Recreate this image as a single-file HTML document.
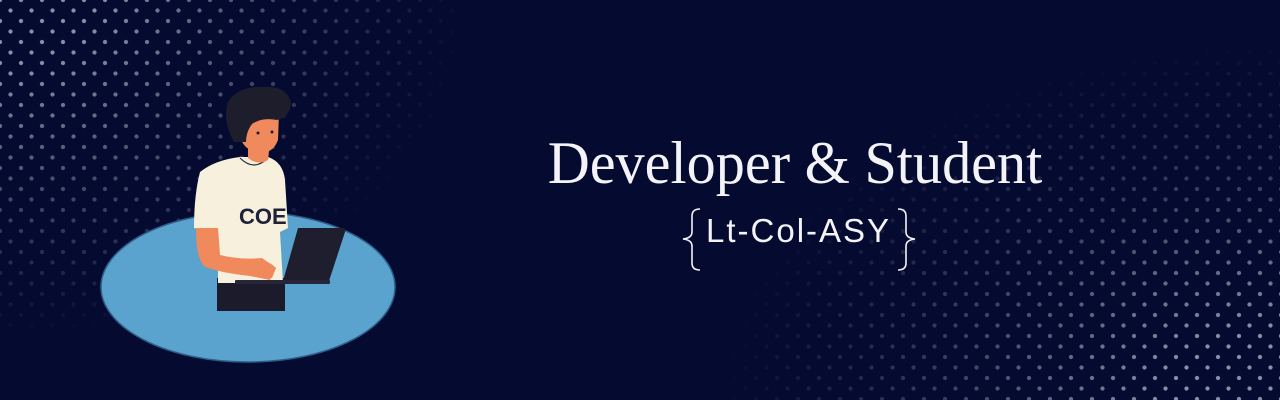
<!DOCTYPE html>
<html><head><meta charset="utf-8"><style>
html,body{margin:0;padding:0}
body{width:1280px;height:400px;overflow:hidden;background:#050a30;position:relative;font-family:"Liberation Sans",sans-serif}
.dots{position:absolute;inset:0;
background-image:radial-gradient(circle,#8a8ea6 1.8px,transparent 2.4px),radial-gradient(circle,#8a8ea6 1.8px,transparent 2.4px);
background-size:21px 21px,21px 21px;background-position:0 0,10.5px 10.5px}
.d1{-webkit-mask-image:radial-gradient(ellipse 470px 340px at 0 0,#000 20%,rgba(0,0,0,.45) 60%,transparent 100%);mask-image:radial-gradient(ellipse 470px 340px at 0 0,#000 20%,rgba(0,0,0,.45) 60%,transparent 100%)}
.d2{-webkit-mask-image:radial-gradient(ellipse 560px 360px at 1280px 400px,#000 20%,rgba(0,0,0,.4) 60%,transparent 100%);mask-image:radial-gradient(ellipse 560px 360px at 1280px 400px,#000 20%,rgba(0,0,0,.4) 60%,transparent 100%)}
.title{position:absolute;left:538px;top:128px;width:514px;text-align:center;font-family:"Liberation Serif",serif;font-size:60px;color:#f3f3f8;white-space:nowrap;line-height:70px;transform:scaleX(0.97);transform-origin:center}
.sub{position:absolute;left:706px;top:211px;font-size:33px;color:#f3f3f8;letter-spacing:2px;line-height:40px}
</style></head><body>
<div class="dots d1"></div>
<div class="dots d2"></div>
<svg width="1280" height="400" style="position:absolute;left:0;top:0">
<ellipse cx="248" cy="287" rx="147" ry="75" fill="#5aa3cf" stroke="#2e5f8a" stroke-width="1.5"/>
<rect x="217" y="278" width="68" height="33" fill="#1c1b2b"/>
<path d="M200 172 Q215 160 240 157 L268 157 Q283 162 285 180 L288 228 L280 232 L283 283 L218 283 L218 232 L194 228 Q194 195 200 172Z" fill="#f6f0dd"/>
<path d="M240 158 Q254 172 268 158" fill="none" stroke="#2a2a3a" stroke-width="1.2"/>
<path d="M196 228 L218 228 L220 255 Q240 260 262 258 L276 268 L270 280 L250 276 Q215 272 204 266 Q196 258 196 228Z" fill="#f08a5d"/>
<path d="M248 142 L270 142 L268 160 Q258 166 248 158Z" fill="#f08a5d"/>
<path d="M242 115 Q262 103 279 112 L278 140 Q272 156 255 152 Q242 148 240 135Z" fill="#f08a5d"/>
<ellipse cx="241" cy="130" rx="5" ry="7" fill="#f08a5d"/>
<path d="M234 142 Q222 120 228 102 Q238 86 262 87 Q287 85 291 103 Q290 117 277 120 Q262 117 252 124 Q246 132 246 142Z" fill="#1e1d2c"/>
<circle cx="258" cy="133" r="1.5" fill="#1e1d2c"/><circle cx="272" cy="132" r="1.5" fill="#1e1d2c"/>
<text x="239" y="224" font-family="Liberation Sans Narrow,Liberation Sans,sans-serif" font-weight="bold" font-size="22" fill="#1e2238">COE</text>
<path d="M298 228 L344 228 Q346 229 345 232 L329 281 L283 281Z" fill="#1f1e2e"/>
<rect x="235" y="280" width="95" height="4" rx="1" fill="#26253a"/>
<path d="M256 262 Q266 258 276 268 L272 278 Q262 274 256 268Z" fill="#f08a5d"/>
</svg>
<div class="title">Developer &amp; Student</div>
<svg width="1280" height="400" style="position:absolute;left:0;top:0" fill="none" stroke="#f3f3f8" stroke-width="1.6">
<path d="M700 209 Q692 209 692 216 L692 232 Q692 238 683 239 Q692 240 692 246 L692 263 Q692 270 700 270"/>
<path d="M898 209 Q906 209 906 216 L906 232 Q906 238 915 239 Q906 240 906 246 L906 263 Q906 270 898 270"/>
</svg>
<div class="sub">Lt-Col-ASY</div>
</body></html>
